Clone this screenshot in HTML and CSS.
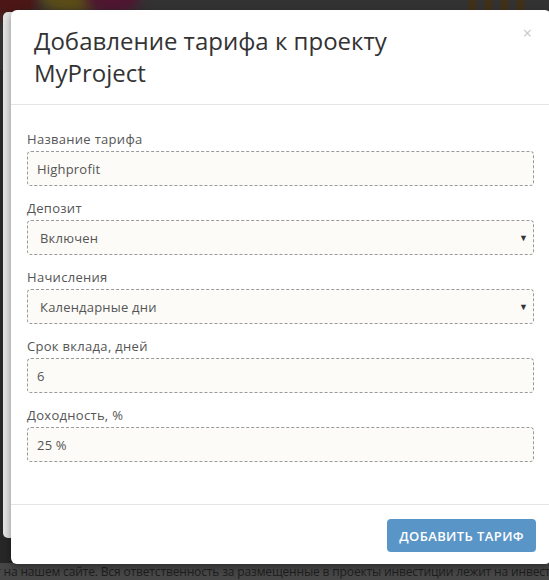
FILE: index.html
```html
<!DOCTYPE html>
<html lang="ru">
<head>
<meta charset="utf-8">
<title>Добавление тарифа</title>
<link rel="stylesheet" href="styles.css">
</head>
<body>
<div class="page">
  <div class="hero"><span class="blob b1"></span><span class="blob b2"></span><span class="blob b3"></span><span class="bars"></span></div>
  <div class="page-main"></div>
  <p class="page-text">т на нашем сайте. Вся ответственность за размещенные в проекты инвестиции лежит на инвесторе.</p>
</div>
<div class="backdrop"></div>
<div class="back-modal"></div>
<div class="modal">
  <div class="modal-header">
    <h4 class="modal-title">Добавление тарифа к проекту MyProject</h4>
    <span class="close">×</span>
  </div>
  <div class="modal-body">
    <div class="form-group">
      <label class="label">Название тарифа</label>
      <div class="field">Highprofit</div>
    </div>
    <div class="form-group">
      <label class="label">Депозит</label>
      <div class="field select">Включен<span class="caret">▼</span></div>
    </div>
    <div class="form-group">
      <label class="label">Начисления</label>
      <div class="field select">Календарные дни<span class="caret">▼</span></div>
    </div>
    <div class="form-group">
      <label class="label">Срок вклада, дней</label>
      <div class="field">6</div>
    </div>
    <div class="form-group">
      <label class="label">Доходность, %</label>
      <div class="field">25 %</div>
    </div>
  </div>
  <div class="modal-footer">
    <button class="btn">Добавить тариф</button>
  </div>
</div>
</body>
</html>
```
FILE: styles.css
```css
html, body {
  margin: 0;
  padding: 0;
}
body {
  width: 549px;
  height: 580px;
  overflow: hidden;
  background: #474747;
  font-family: "Open Sans", "Liberation Sans", sans-serif;
  position: relative;
}
.page {
  display: flex;
  flex-direction: column;
  height: 580px;
}
.hero {
  height: 70px;
  background: #3c3c3c;
  position: relative;
  overflow: hidden;
}
.blob {
  position: absolute;
  border-radius: 50%;
  filter: blur(6px);
}
.b1 { left: -20px; top: -20px; width: 60px; height: 40px; background: #5a1b1b; }
.b2 { left: 40px; top: -25px; width: 60px; height: 40px; background: #6b5a1c; }
.b3 { left: 85px; top: -20px; width: 55px; height: 35px; background: #5e1a3a; }
.bars {
  position: absolute;
  left: 468px; top: 0; width: 60px; height: 12px;
  background: repeating-linear-gradient(90deg, #4d3a20 0 9px, #3c3c3c 9px 16px);
}
.page-main {
  flex: 1;
  background: #2e2e2e;
}
.page-text {
  margin: 0;
  height: 17px;
  line-height: 17px;
  background: #474747;
  color: #1e1e1e;
  font-size: 12px;
  letter-spacing: -0.15px;
  white-space: nowrap;
  overflow: hidden;
  text-indent: -5px;
}
.backdrop {
  position: absolute;
  inset: 0 0 17px 0;
  background: rgba(0,0,0,0.15);
}
.back-modal {
  position: absolute;
  left: 3px;
  top: 12px;
  width: 30px;
  height: 526px;
  background: #e4e4e4;
  border-radius: 5px;
}
.modal {
  position: absolute;
  left: 11px;
  top: 10px;
  width: 540px;
  background: #fff;
  border-radius: 6px;
  box-shadow: 0 3px 9px rgba(0,0,0,0.4);
  color: #333;
}
.modal-header {
  position: relative;
  padding: 15px 120px 15px 23px;
  border-bottom: 1px solid #e5e5e5;
}
.modal-title {
  margin: 0;
  font-size: 24px;
  line-height: 32px;
  font-weight: 400;
  color: #333;
}
.close {
  position: absolute;
  right: 19px;
  top: 12px;
  font-size: 16px;
  color: #c8c8c8;
}
.modal-body {
  padding: 25px 17px 42px 16px;
  display: flex;
  flex-direction: column;
  gap: 13px;
}
.form-group {
  display: flex;
  flex-direction: column;
  gap: 3px;
}
.label {
  font-size: 13px;
  letter-spacing: 0.3px;
  line-height: 18px;
  color: #555;
}
.field {
  height: 35px;
  box-sizing: border-box;
  border: 1px dashed #9a9a9a;
  border-radius: 4px;
  background: #fcfbf8;
  padding: 0 9px;
  display: flex;
  align-items: center;
  font-size: 13px;
  letter-spacing: 0.2px;
  color: #555;
  position: relative;
}
.select {
  padding-left: 12px;
}
.caret {
  position: absolute;
  right: 5px;
  top: 10px;
  font-size: 9px;
  color: #333;
}
.modal-footer {
  border-top: 1px solid #e5e5e5;
  padding: 14px 15px 12px;
  display: flex;
  justify-content: flex-end;
}
.btn {
  height: 33px;
  padding: 0 12px;
  border: none;
  border-radius: 4px;
  background: #5a95c8;
  color: #fff;
  font-family: inherit;
  font-size: 13px;
  letter-spacing: 0.4px;
  font-weight: 600;
  text-transform: uppercase;
}
```
